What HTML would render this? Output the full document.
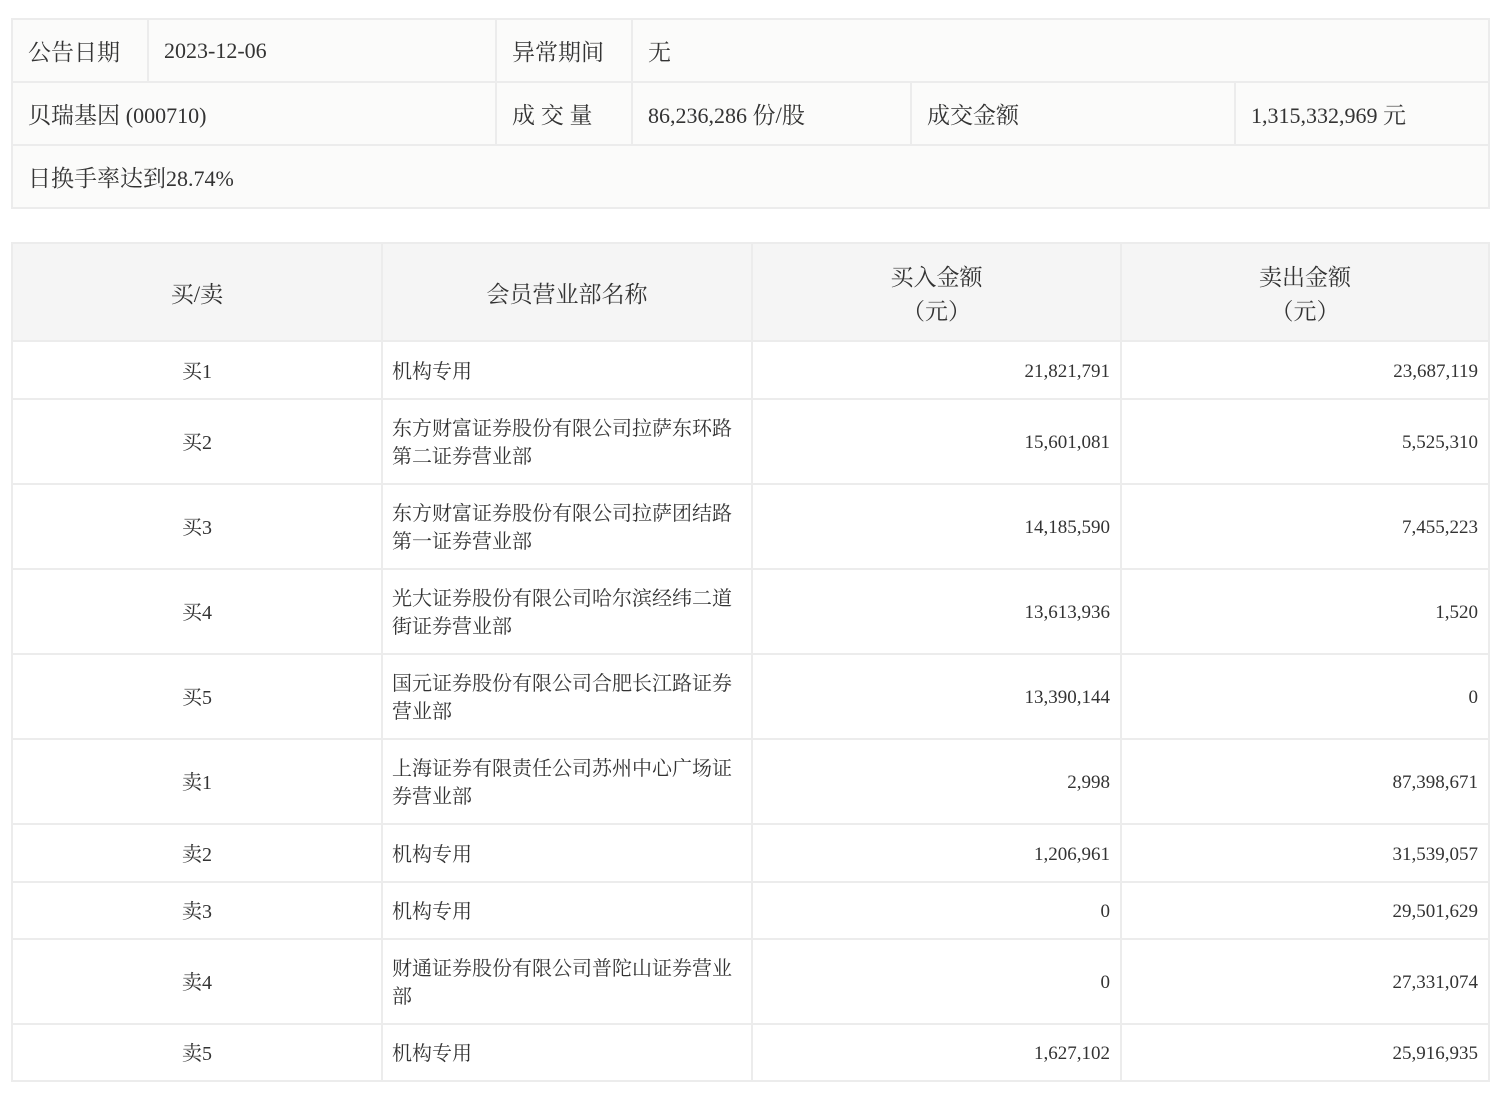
<!DOCTYPE html>
<html><head><meta charset="utf-8"><style>
html,body{margin:0;padding:0;background:#fff;width:1504px;height:1096px;overflow:hidden}
body{font-family:"Liberation Serif","Noto Serif CJK SC","Noto Serif CJK JP",serif;color:#333}
table{border-collapse:collapse;table-layout:fixed;position:absolute;left:11px;width:1477px}
td,th{border:2px solid #ececec;padding:0;box-sizing:border-box;font-weight:normal}
#t1{top:18px;font-size:22px;background:#fbfbfa}
#t1 td{height:63px;padding-left:15px}
#t1 .z{font-size:23px}
#t2{top:242px;font-size:19px;background:#fff}
#t2 th{background:#f5f5f5;height:98px;font-size:23px;line-height:34px;text-align:center;padding-top:6px}
#t2 td{line-height:28px;padding-top:3px}
#t2 td.c{text-align:center;font-size:20px}
#t2 td.l{padding-left:9px;padding-right:14px;font-size:20px}
#t2 td.r{text-align:right;padding-right:10px}
</style></head><body>
<table id="t1">
<colgroup><col style="width:136px"><col style="width:348px"><col style="width:136px"><col style="width:279px"><col style="width:324px"><col style="width:254px"></colgroup>
<tr><td class="z">公告日期</td><td>2023-12-06</td><td class="z">异常期间</td><td colspan="3" class="z">无</td></tr>
<tr><td colspan="2" class="z">贝瑞基因 <span style="font-size:22px">(000710)</span></td><td class="z">成 交 量</td><td>86,236,286 <span class="z">份/股</span></td><td class="z">成交金额</td><td>1,315,332,969 <span class="z">元</span></td></tr>
<tr><td colspan="6" class="z">日换手率达到<span style="font-size:22px">28.74%</span></td></tr>
</table>
<table id="t2">
<colgroup><col style="width:370px"><col style="width:370px"><col style="width:369px"><col style="width:368px"></colgroup>
<tr><th>买/卖</th><th>会员营业部名称</th><th>买入金额<br>（元）</th><th>卖出金额<br>（元）</th></tr>
<tr style="height:58px"><td class="c">买1</td><td class="l">机构专用</td><td class="r">21,821,791</td><td class="r">23,687,119</td></tr>
<tr style="height:85px"><td class="c">买2</td><td class="l">东方财富证券股份有限公司拉萨东环路第二证券营业部</td><td class="r">15,601,081</td><td class="r">5,525,310</td></tr>
<tr style="height:85px"><td class="c">买3</td><td class="l">东方财富证券股份有限公司拉萨团结路第一证券营业部</td><td class="r">14,185,590</td><td class="r">7,455,223</td></tr>
<tr style="height:85px"><td class="c">买4</td><td class="l">光大证券股份有限公司哈尔滨经纬二道街证券营业部</td><td class="r">13,613,936</td><td class="r">1,520</td></tr>
<tr style="height:85px"><td class="c">买5</td><td class="l">国元证券股份有限公司合肥长江路证券营业部</td><td class="r">13,390,144</td><td class="r">0</td></tr>
<tr style="height:85px"><td class="c">卖1</td><td class="l">上海证券有限责任公司苏州中心广场证券营业部</td><td class="r">2,998</td><td class="r">87,398,671</td></tr>
<tr style="height:58px"><td class="c">卖2</td><td class="l">机构专用</td><td class="r">1,206,961</td><td class="r">31,539,057</td></tr>
<tr style="height:57px"><td class="c">卖3</td><td class="l">机构专用</td><td class="r">0</td><td class="r">29,501,629</td></tr>
<tr style="height:85px"><td class="c">卖4</td><td class="l">财通证券股份有限公司普陀山证券营业部</td><td class="r">0</td><td class="r">27,331,074</td></tr>
<tr style="height:57px"><td class="c">卖5</td><td class="l">机构专用</td><td class="r">1,627,102</td><td class="r">25,916,935</td></tr>
</table>
</body></html>
